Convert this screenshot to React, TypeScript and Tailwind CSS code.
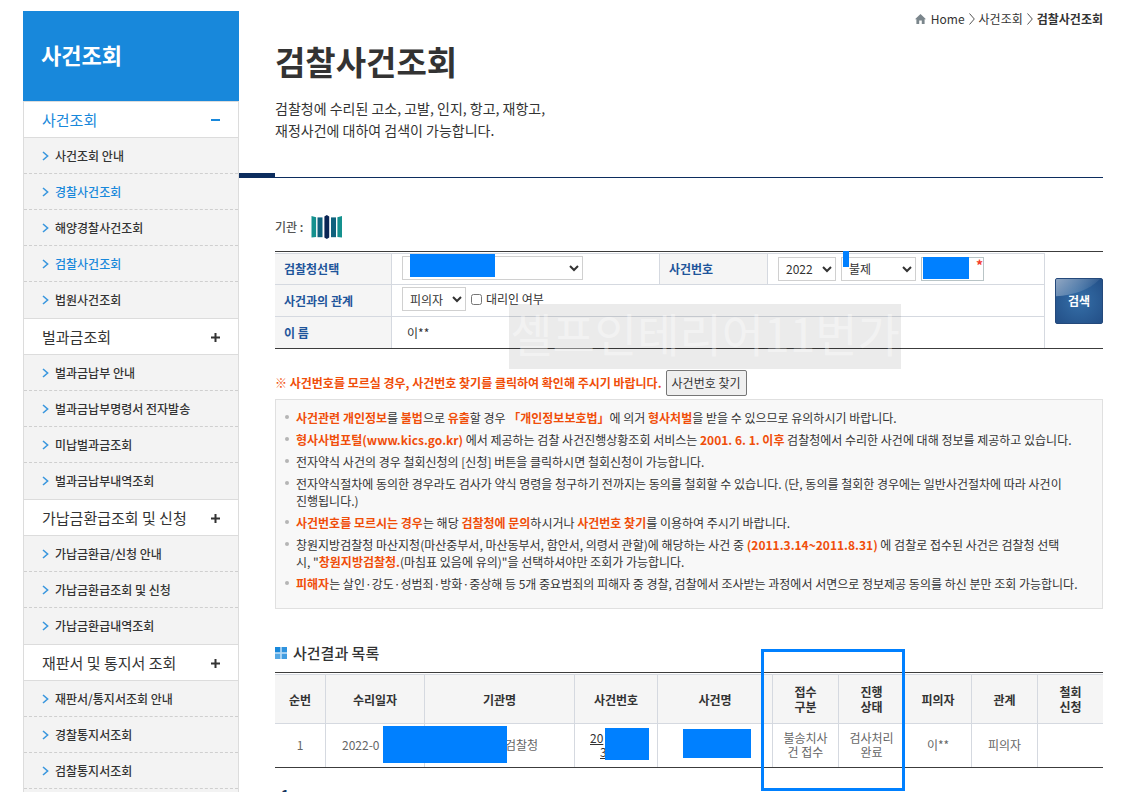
import React, { useState } from "react";

interface MenuItem {
  label: string;
  active?: boolean;
}

interface MenuSection {
  title: string;
  open?: boolean;
  items: MenuItem[];
}

const MENU: MenuSection[] = [
  {
    title: "사건조회",
    open: true,
    items: [
      { label: "사건조회 안내" },
      { label: "경찰사건조회", active: true },
      { label: "해양경찰사건조회" },
      { label: "검찰사건조회", active: true },
      { label: "법원사건조회" },
    ],
  },
  {
    title: "벌과금조회",
    items: [
      { label: "벌과금납부 안내" },
      { label: "벌과금납부명령서 전자발송" },
      { label: "미납벌과금조회" },
      { label: "벌과금납부내역조회" },
    ],
  },
  {
    title: "가납금환급조회 및 신청",
    items: [
      { label: "가납금환급/신청 안내" },
      { label: "가납금환급조회 및 신청" },
      { label: "가납금환급내역조회" },
    ],
  },
  {
    title: "재판서 및 통지서 조회",
    items: [
      { label: "재판서/통지서조회 안내" },
      { label: "경찰통지서조회" },
      { label: "검찰통지서조회" },
    ],
  },
];

function Chevron() {
  return (
    <svg className="w-[7px] h-[10px] shrink-0" viewBox="0 0 7 10" fill="none" stroke="#3a97de" strokeWidth="1.6">
      <path d="M1 1l4.6 4L1 9" />
    </svg>
  );
}

function Sidebar() {
  return (
    <aside className="w-54 shrink-0 flex flex-col">
      <h2 className="h-[90px] flex items-center bg-[#1888db] pl-[18px] pb-[3px] text-[22px] font-bold text-white">사건조회</h2>
      <nav className="flex-1 border-x border-[#dcdcdc] bg-[#f3f3f3] text-[#333]">
        {MENU.map((section) => (
          <div key={section.title} className="group">
            <button
              type="button"
              className={
                section.open
                  ? "w-full h-[37px] flex items-center justify-between border-y border-[#dcdcdc] bg-white px-[18px] pt-[2px] text-[15px] text-[#1888db]"
                  : "w-full h-[37px] flex items-center justify-between border-y border-[#dcdcdc] bg-white px-[18px] pt-[2px] text-[15px]"
              }
            >
              {section.title}
              <svg className="w-[9px] h-[9px]" viewBox="0 0 9 9" stroke="currentColor" strokeWidth="2">
                <path d={section.open ? "M0 4h9" : "M0 4.5h9M4.5 0v9"} />
              </svg>
            </button>
            <ul className="[&>li]:border-b [&>li]:border-dashed [&>li]:border-[#cfcfcf] group-not-last:[&>li:last-child]:border-transparent">
              {section.items.map((item) => (
                <li key={item.label} className="h-9">
                  <a
                    href="#"
                    className={
                      item.active
                        ? "h-full flex items-center gap-[6px] pl-[18px] text-[12px] font-medium text-[#1888db]"
                        : "h-full flex items-center gap-[6px] pl-[18px] text-[12px] font-medium"
                    }
                  >
                    <Chevron />
                    {item.label}
                  </a>
                </li>
              ))}
            </ul>
          </div>
        ))}
      </nav>
    </aside>
  );
}

function Breadcrumb() {
  return (
    <div className="flex items-center justify-end gap-1 h-4 text-[12px] leading-4 text-[#333]">
      <svg className="w-[11px] h-[10px] mr-px" viewBox="0 0 11 10" fill="#7b868c">
        <path d="M5.5 0L11 5.2H9.6V10H6.8V6.4H4.2V10H1.4V5.2H0z" />
      </svg>
      <a href="#">Home</a>
      <svg className="w-[6px] h-3" viewBox="0 0 6 12" fill="none" stroke="#555">
        <path d="M0.5 0.5L5.3 6 0.5 11.5" />
      </svg>
      <a href="#">사건조회</a>
      <svg className="w-[6px] h-3" viewBox="0 0 6 12" fill="none" stroke="#555">
        <path d="M0.5 0.5L5.3 6 0.5 11.5" />
      </svg>
      <strong>검찰사건조회</strong>
    </div>
  );
}

function AgencyLogo() {
  return (
    <svg className="w-8 h-6" viewBox="0 0 32 24">
      <path d="M0.5 1l4.6 1.2V22l-4.6 .6z" fill="#14918e" />
      <path d="M6.5 2.4h5v19.8h-5z" fill="#0f627d" />
      <path d="M13.4 1.4L15.8 0l2.4 1.4v21.2L15.8 24l-2.4-1.4z" fill="#0a2554" />
      <path d="M20 2.4h5v19.8h-5z" fill="#0f627d" />
      <path d="M31 1l-4.6 1.2V22l4.6 .6z" fill="#14918e" />
    </svg>
  );
}

function SearchForm() {
  const [proxy, setProxy] = useState(false);

  return (
    <form
      className="relative mt-3 flex items-stretch border-y border-[#3c3c3c] pt-px"
      onSubmit={(e) => e.preventDefault()}
    >
      <table className="flex-1 table-fixed border-separate border-spacing-0 border-t border-r border-[#d5d9e0] text-[12px] leading-4 text-[#333] [&_th]:border-r [&_th]:border-[#d5d9e0] [&_th]:bg-[#f5f5f5] [&_th]:pl-[9px] [&_th]:text-left [&_th]:text-[#1f559b]">
        <colgroup>
          <col className="w-[117px]" />
          <col />
          <col className="w-[108px]" />
          <col className="w-[276px]" />
        </colgroup>
        <tbody>
          <tr className="h-[31px] [&>*]:border-b [&>*]:border-[#d5d9e0]">
            <th scope="row">
              <label htmlFor="office">검찰청선택</label>
            </th>
            <td className="border-r pl-[10px] pb-[3px]">
              <div className="relative flex">
                <select id="office" className="w-[181px] h-6 border border-[#d0d0d0] bg-white pl-1">
                  <option value=""></option>
                </select>
                <span className="absolute left-2 -top-[2px] w-[85px] h-[23px] bg-[#0080ff]" />
              </div>
            </td>
            <th scope="row">
              <label htmlFor="year">사건번호</label>
            </th>
            <td className="pl-[10px] pb-px">
              <div className="flex gap-[5px]">
                <select id="year" className="w-[58px] h-6 border border-[#d0d0d0] bg-white pl-[3px]">
                  <option>2022</option>
                </select>
                <div className="relative">
                  <select aria-label="사건구분" className="w-[75px] h-6 border border-[#d0d0d0] bg-white pl-[3px]">
                    <option>불제</option>
                  </select>
                  <span className="absolute left-[2px] -top-[6px] w-[6px] h-4 bg-[#0080ff]" />
                </div>
                <div className="relative">
                  <input type="text" aria-label="사건번호 입력" className="w-[63px] h-6 border border-[#b9c4c6] bg-white" />
                  <span className="absolute left-[2px] top-0 w-[46px] h-[22px] bg-[#0080ff]" />
                  <span className="absolute right-[1px] top-0 text-[14px] leading-4 font-bold text-[#f43b2a]">*</span>
                </div>
              </div>
            </td>
          </tr>
          <tr className="h-8 [&>*]:border-b [&>*]:border-[#d5d9e0]">
            <th scope="row">
              <label htmlFor="relation">사건과의 관계</label>
            </th>
            <td colSpan={3} className="pl-[10px] pb-[3px]">
              <div className="flex items-center gap-[5px]">
                <select id="relation" className="w-16 h-6 border border-[#d0d0d0] bg-white pl-[3px]">
                  <option>피의자</option>
                </select>
                <label className="flex items-center gap-[4px]">
                  <input
                    type="checkbox"
                    className="w-[11px] h-[11px]"
                    checked={proxy}
                    onChange={(e) => setProxy(e.target.checked)}
                  />
                  대리인 여부
                </label>
              </div>
            </td>
          </tr>
          <tr className="h-[31px]">
            <th scope="row">이 름</th>
            <td colSpan={3} className="pl-[15px]">이**</td>
          </tr>
        </tbody>
      </table>
      <div className="flex items-center pl-[10px]">
        <button
          type="submit"
          className="relative w-12 h-[46px] overflow-hidden rounded-[2px] border border-[#24497b] bg-radial from-[#356fa8] to-[#234f87] text-[12px] font-bold text-white"
        >
          <svg className="absolute inset-0 w-full h-full" viewBox="0 0 48 46" preserveAspectRatio="none">
            <defs>
              <linearGradient id="gloss" x1="0" y1="0" x2="1" y2="0.4">
                <stop offset="0" stopColor="#fff" stopOpacity="0.5" />
                <stop offset="1" stopColor="#fff" stopOpacity="0" />
              </linearGradient>
            </defs>
            <path d="M0 0h46C34 12 18 17 0 18z" fill="url(#gloss)" />
          </svg>
          <span className="relative">검색</span>
        </button>
      </div>
      <div className="pointer-events-none absolute left-[234px] top-[52px] w-[392px] h-[65px] bg-black/8 text-center text-[46px] leading-[56px] whitespace-nowrap text-white/40">
        셀프인테리어11번가
      </div>
    </form>
  );
}

function Notices() {
  return (
    <ul className="mt-[3px] border border-[#e0e0e0] bg-[#f8f8f8] pl-5 pr-1 pt-[9px] pb-[11px] text-[12px] leading-[17px] text-[#333] [&_b]:text-[#f04e0a] [&>li]:relative [&>li]:mb-[5px] [&>li]:before:absolute [&>li]:before:-left-[11px] [&>li]:before:top-[6px] [&>li]:before:w-1 [&>li]:before:h-1 [&>li]:before:rounded-full [&>li]:before:bg-[#b5b5b5] [&>li]:before:content-['']">
      <li>
        <b>사건관련 개인정보</b>를 <b>불법</b>으로 <b>유출</b>할 경우 <b>「개인정보보호법」</b>에 의거 <b>형사처벌</b>을 받을 수 있으므로 유의하시기 바랍니다.
      </li>
      <li>
        <b>형사사법포털(www.kics.go.kr)</b> 에서 제공하는 검찰 사건진행상황조회 서비스는 <b>2001. 6. 1. 이후</b> 검찰청에서 수리한 사건에 대해 정보를 제공하고 있습니다.
      </li>
      <li>전자약식 사건의 경우 철회신청의 [신청] 버튼을 클릭하시면 철회신청이 가능합니다.</li>
      <li>
        전자약식절차에 동의한 경우라도 검사가 약식 명령을 청구하기 전까지는 동의를 철회할 수 있습니다. (단, 동의를 철회한 경우에는 일반사건절차에 따라 사건이
        <br />
        진행됩니다.)
      </li>
      <li>
        <b>사건번호를 모르시는 경우</b>는 해당 <b>검찰청에 문의</b>하시거나 <b>사건번호 찾기</b>를 이용하여 주시기 바랍니다.
      </li>
      <li>
        창원지방검찰청 마산지청(마산중부서, 마산동부서, 함안서, 의령서 관할)에 해당하는 사건 중 <b>(2011.3.14~2011.8.31)</b> 에 검찰로 접수된 사건은 검찰청 선택
        <br />
        시, "<b>창원지방검찰청.</b>(마침표 있음에 유의)"을 선택하셔야만 조회가 가능합니다.
      </li>
      <li>
        <b>피해자</b>는 살인·강도·성범죄·방화·중상해 등 5개 중요범죄의 피해자 중 경찰, 검찰에서 조사받는 과정에서 서면으로 정보제공 동의를 하신 분만 조회 가능합니다.
      </li>
    </ul>
  );
}

function ResultTable() {
  return (
    <div className="mt-[9px] border-y border-[#3c3c3c] pt-px">
      <table className="w-full table-fixed border-separate border-spacing-0 border-t border-[#d5d9e0] text-center text-[12px] text-[#666] [&_tr>*:not(:last-child)]:border-r [&_tr>*]:border-[#d5d9e0]">
        <colgroup>
          <col className="w-[51px]" />
          <col className="w-[99px]" />
          <col className="w-[150px]" />
          <col className="w-[83px]" />
          <col className="w-[115px]" />
          <col className="w-[66px]" />
          <col className="w-[66px]" />
          <col className="w-[67px]" />
          <col className="w-[66px]" />
          <col className="w-[65px]" />
        </colgroup>
        <thead className="bg-[#f5f5f5] leading-[15px] text-[#333]">
          <tr className="h-[49px] [&>th]:border-b">
            <th>순번</th>
            <th>수리일자</th>
            <th>기관명</th>
            <th>사건번호</th>
            <th>사건명</th>
            <th className="relative">
              접수
              <br />
              구분
              {/* marks the two status columns */}
              <span className="pointer-events-none absolute z-10 -left-3 -top-[26px] w-36 h-[142px] border-3 border-[#0080ff]" />
            </th>
            <th>
              진행
              <br />
              상태
            </th>
            <th>피의자</th>
            <th>관계</th>
            <th>
              철회
              <br />
              신청
            </th>
          </tr>
        </thead>
        <tbody className="leading-[14px]">
          <tr className="h-[43px] [&>td]:pb-[2px]">
            <td>1</td>
            <td className="relative pl-4 text-left">
              2022-0
              <span className="absolute z-10 left-[57px] top-[2px] w-[124px] h-[37px] bg-[#0080ff]" />
            </td>
            <td className="pl-[80px] text-left">검찰청</td>
            <td className="relative pl-[15px] text-left text-[#333]">
              <a href="#" className="underline">
                20
                <br />
                <span className="pl-[10px]">3</span>
              </a>
              <span className="absolute left-[30px] top-1 w-11 h-8 bg-[#0080ff]" />
            </td>
            <td className="relative">
              <span className="absolute left-[25px] top-[5px] w-[68px] h-[29px] bg-[#0080ff]" />
            </td>
            <td>
              불송치사
              <br />건 접수
            </td>
            <td>
              검사처리
              <br />
              완료
            </td>
            <td>이**</td>
            <td>피의자</td>
            <td></td>
          </tr>
        </tbody>
      </table>
    </div>
  );
}

export default function App() {
  return (
    <div className="min-h-screen flex bg-white pl-[23px] pr-[22px] pt-[11px] font-['Noto_Sans_CJK_KR','Noto_Sans',sans-serif]">
      <Sidebar />
      <main className="flex-1 min-w-0">
        <header className="pl-9">
          <Breadcrumb />
          <h1 className="mt-[14px] text-[33px] leading-10 font-bold text-[#333]">검찰사건조회</h1>
          <p className="mt-4 text-[14px] leading-[22px] text-[#333]">
            검찰청에 수리된 고소, 고발, 인지, 항고, 재항고,
            <br />
            재정사건에 대하여 검색이 가능합니다.
          </p>
        </header>
        <div className="mt-8 flex items-end">
          <div className="w-9 h-[5px] bg-[#0c2d5e]" />
          <div className="flex-1 h-px bg-[#0c2d5e]" />
        </div>
        <div className="pl-9">
          <div className="mt-[37px] flex items-center gap-2 h-6 text-[12px] font-medium text-[#555]">
            기관 :
            <AgencyLogo />
          </div>
          <SearchForm />
          <div className="mt-[21px] flex items-center gap-1 h-[26px] text-[12px]">
            <strong className="text-[#f04e0a]">
              ※ 사건번호를 모르실 경우, 사건번호 찾기를 클릭하여 확인해 주시기 바랍니다.
            </strong>
            <button type="button" className="h-[26px] rounded-[2px] border border-[#767676] bg-[#efefef] px-[5px] text-[#333]">
              사건번호 찾기
            </button>
          </div>
          <Notices />
          <h3 className="mt-[34px] flex items-center gap-[6px] text-[15px] leading-5 font-medium text-[#333]">
            <svg className="w-3 h-3" viewBox="0 0 12 12">
              <path d="M0 0h5.5v5.5H0z" fill="#1888db" />
              <path d="M6.5 0H12v5.5H6.5z" fill="#2f93de" />
              <path d="M0 6.5h5.5V12H0z" fill="#55a8e4" />
              <path d="M6.5 6.5H12V12H6.5z" fill="#429de1" />
              <path d="M5.5 0h1v12h-1zM0 5.5h12v1H0z" fill="#a9d2f2" />
            </svg>
            사건결과 목록
          </h3>
          <ResultTable />
          <div className="mt-4 pl-[6px] text-[14px] leading-5 font-bold text-[#17335f]">1</div>
        </div>
      </main>
    </div>
  );
}
